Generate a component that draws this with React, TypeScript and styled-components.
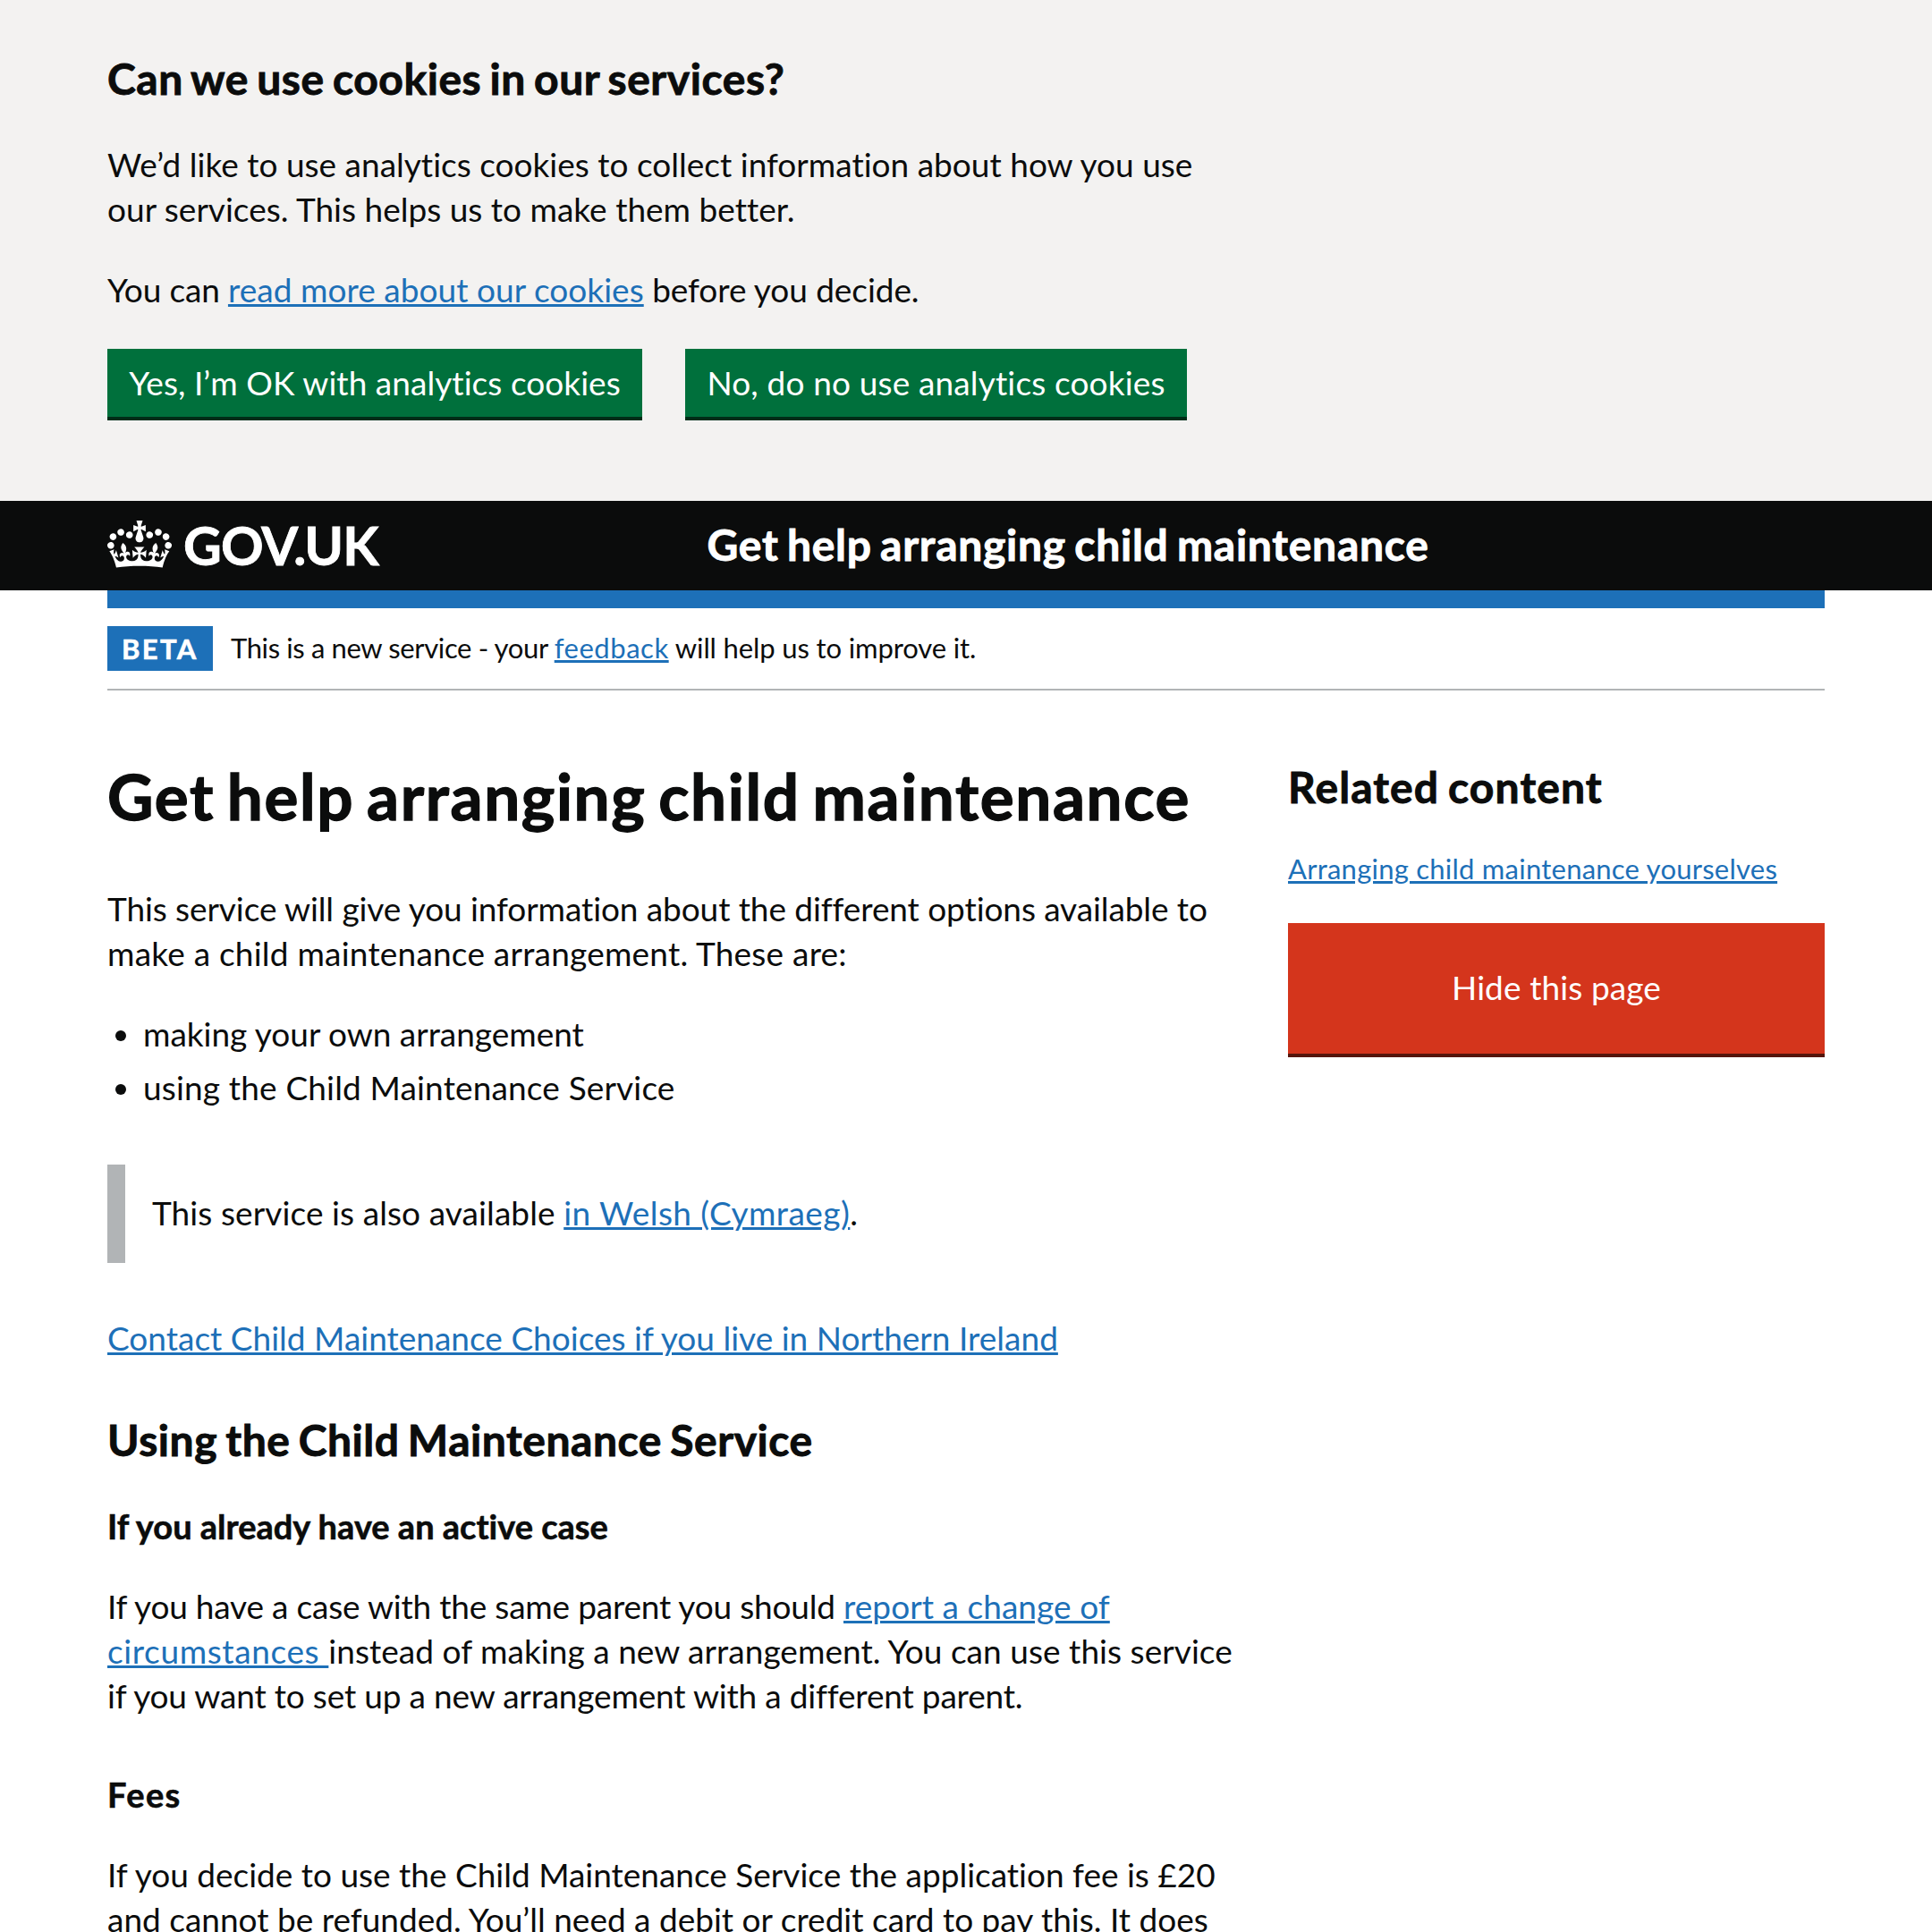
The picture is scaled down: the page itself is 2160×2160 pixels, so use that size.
import React from 'react';
import styled, { createGlobalStyle } from 'styled-components';

const colour = {
  text: '#0b0c0c',
  link: '#1d70b8',
  grey: '#f3f2f1',
  border: '#b1b4b6',
  green: '#00703c',
  greenShadow: '#002d18',
  red: '#d4351c',
  redShadow: '#55150b',
};

const GlobalStyle = createGlobalStyle`
  *, *::before, *::after { box-sizing: border-box; }
  body {
    margin: 0;
    background: #fff;
    color: ${colour.text};
    font-family: Lato, "Noto Sans", sans-serif;
    font-variant-ligatures: none;
  }
  h1, h2, h3, p, ul { margin: 0; padding: 0; }
`;

const Page = styled.div`
  height: 2160px;
  overflow: hidden;
`;

const Container = styled.div`
  width: 1920px;
  margin: 0 auto;
`;

/* A run of text with its own tracking */
const Run = styled.span<{ $track?: number }>`
  letter-spacing: ${({ $track = 0 }) => $track}px;
  white-space: pre;
`;

const Link = styled.a<{ $track?: number }>`
  color: ${colour.link};
  letter-spacing: ${({ $track = 0 }) => $track}px;
  white-space: pre;
  text-decoration: underline;
  text-decoration-thickness: 3px;
  text-underline-offset: 2px;
`;

const Body = styled.p<{ $gap?: number }>`
  font-size: 37px;
  line-height: 50px;
  margin-bottom: ${({ $gap = 40 }) => $gap}px;
`;

const PageTitle = styled.h1`
  font-size: 71px;
  line-height: 80px;
  padding-top: 1px;
  margin-bottom: 61px;
  word-spacing: -5px;
  -webkit-text-stroke: 1.3px currentColor;
`;

const Heading = styled.h2<{ $gap?: number }>`
  font-size: 48px;
  line-height: 60px;
  padding-top: 1px;
  margin-bottom: ${({ $gap = 41 }) => $gap}px;
  word-spacing: -3px;
  -webkit-text-stroke: 0.9px currentColor;
`;

const SubHeading = styled.h3`
  font-size: 38px;
  line-height: 50px;
  margin-bottom: 40px;
  -webkit-text-stroke: 0.6px currentColor;
`;

const CookieBanner = styled.section`
  height: 560px;
  padding-top: 57px;
  background: ${colour.grey};
`;

const ButtonRow = styled.div`
  display: flex;
  gap: 48px;
`;

const Button = styled.button<{ $width: number }>`
  width: ${({ $width }) => $width}px;
  height: 76px;
  padding: 0 0 1px;
  border: 0;
  background: ${colour.green};
  box-shadow: 0 4px 0 ${colour.greenShadow};
  color: #fff;
  font: 400 37px/50px Lato, "Noto Sans", sans-serif;
  text-align: center;
`;

const HideButton = styled(Button)`
  height: 146px;
  padding-bottom: 2px;
  background: ${colour.red};
  box-shadow: 0 4px 0 ${colour.redShadow};
`;

const Header = styled.header`
  background: ${colour.text};
  color: #fff;
`;

const HeaderRow = styled(Container)`
  display: flex;
  align-items: center;
  height: 100px;
`;

const Logo = styled.a`
  display: flex;
  align-items: center;
  width: 670.5px;
  color: #fff;
`;

const Crown = styled.svg`
  width: 72px;
  height: 53px;
  margin-right: 13px;
  margin-top: -4px;
`;

const LogoText = styled.span`
  font-size: 59px;
  font-weight: 700;
  line-height: 70px;
  letter-spacing: -0.9px;
  -webkit-text-stroke: 0.8px currentColor;
`;

const ServiceName = styled.span`
  font-size: 48px;
  font-weight: 700;
  line-height: 60px;
  letter-spacing: 0.73px;
  word-spacing: -3px;
  margin-bottom: 3px;
  -webkit-text-stroke: 0.9px currentColor;
`;

const BlueBar = styled(Container)`
  height: 20px;
  background: ${colour.link};
`;

const PhaseBanner = styled(Container)`
  display: flex;
  align-items: center;
  height: 92px;
  padding: 20px 0;
  border-bottom: 2px solid ${colour.border};
`;

const PhaseTag = styled.strong`
  width: 118px;
  height: 50px;
  padding-left: 16px;
  margin-right: 20px;
  background: ${colour.link};
  color: #fff;
  font-size: 31px;
  line-height: 51px;
  letter-spacing: 2.4px;
  -webkit-text-stroke: 0.6px currentColor;
`;

const PhaseText = styled.span`
  font-size: 31px;
  line-height: 50px;
  padding-bottom: 2px;
`;

const Columns = styled(Container)`
  display: grid;
  grid-template-columns: 1280px 600px;
  column-gap: 40px;
  padding-top: 77px;
`;

const BulletList = styled.ul`
  display: grid;
  row-gap: 10px;
  margin-bottom: 61px;
  list-style: none;
  font-size: 37px;
  line-height: 50px;
`;

const Bullet = styled.li`
  display: flex;
  align-items: center;
  &::before {
    content: '';
    width: 12px;
    height: 12px;
    margin: 4px 19px 0 9px;
    border-radius: 50%;
    background: ${colour.text};
  }
`;

const Inset = styled.div`
  height: 110px;
  margin-bottom: 59px;
  padding: 29px 30px;
  border-left: 20px solid ${colour.border};
  font-size: 37px;
  line-height: 50px;
`;

const RelatedLink = styled.p`
  font-size: 31px;
  line-height: 50px;
  margin-bottom: 36px;
`;

const crownPath =
  'M25 30.2c3.5 1.5 7.7-.2 9.1-3.7 1.5-3.6-.2-7.8-3.9-9.2-3.6-1.4-7.6.3-9.1 3.9-1.4 3.5.3 7.5 3.9 9zM9 39.5c3.6 1.5 7.8-.2 9.2-3.7 1.5-3.6-.2-7.8-3.9-9.1-3.6-1.5-7.6.2-9.1 3.8-1.4 3.5.3 7.5 3.8 9zM4.4 57.2c3.5 1.5 7.7-.2 9.1-3.8 1.5-3.6-.2-7.7-3.9-9.1-3.5-1.5-7.6.3-9.1 3.8-1.4 3.5.3 7.6 3.9 9.1zm38.3-21.4c3.5 1.5 7.7-.2 9.1-3.8 1.5-3.6-.2-7.7-3.9-9.1-3.6-1.5-7.6.3-9.1 3.8-1.3 3.6.4 7.7 3.9 9.1zm64.4-5.6c-3.6 1.5-7.8-.2-9.1-3.7-1.5-3.6.2-7.8 3.8-9.2 3.6-1.4 7.7.3 9.2 3.9 1.3 3.5-.4 7.5-3.9 9zm15.9 9.3c-3.6 1.5-7.7-.2-9.1-3.7-1.5-3.6.2-7.8 3.7-9.1 3.6-1.5 7.7.2 9.2 3.8 1.5 3.5-.3 7.5-3.8 9zm4.7 17.7c-3.6 1.5-7.8-.2-9.2-3.8-1.5-3.6.2-7.7 3.9-9.1 3.6-1.5 7.7.3 9.2 3.8 1.3 3.5-.4 7.6-3.9 9.1zM89.3 35.8c-3.6 1.5-7.8-.2-9.2-3.8-1.4-3.6.2-7.7 3.9-9.1 3.6-1.5 7.7.3 9.2 3.8 1.4 3.6-.3 7.7-3.9 9.1zM69.7 17.7l8.9 4.7V9.3l-8.9 2.8c-.2-.3-.5-.6-.9-.9L72.4 0H59.6l3.5 11.2c-.3.3-.6.5-.9.9l-8.8-2.8v13.1l8.8-4.7c.3.3.6.7.9.9l-5 15.4v.1c-.2.8-.4 1.6-.4 2.4 0 4.1 3.1 7.5 7 8.1h.2c.3 0 .7.1 1 .1.4 0 .7 0 1-.1h.2c4-.6 7.1-4.1 7.1-8.1 0-.8-.1-1.7-.4-2.4V34l-5.1-15.4c.4-.2.7-.6 1-.9zM66 92.8c16.9 0 32.8 1.1 47.1 3.2 4-16.9 8.9-26.7 14-33.5l-9.6-3.4c1 4.9 1.1 7.2 0 10.2-1.5-1.4-3-4.3-4.2-8.7L108.6 76c2.8-2 5-3.2 7.5-3.3-4.4 9.4-10 11.9-13.6 11.2-4.3-.8-6.3-4.6-5.6-7.9 1-4.7 5.7-5.9 8-.5 4.3-8.7-3-11.4-7.6-8.8 7.1-7.2 7.9-13.5 2.1-21.1-8 6.1-8.1 12.3-4.5 20.8-4.7-5.4-12.1-2.5-9.5 6.2 3.4-5.2 7.9-2 7.2 3.1-.6 4.3-6.4 7.8-13.5 7.2-10.3-.9-10.9-8-11.2-13.8 2.5-.5 7.1 1.8 11 7.3L80.2 60c-4.1 4.4-8 5.3-12.3 5.4 1.4-4.4 8-11.6 8-11.6H55.5s6.4 7.2 7.9 11.6c-4.2-.1-8-1-12.3-5.4l1.4 16.4c3.9-5.5 8.5-7.7 10.9-7.3-.3 5.8-.9 12.8-11.1 13.8-7.2.6-12.9-2.9-13.5-7.2-.7-5 3.8-8.3 7.1-3.1 2.7-8.7-4.6-11.6-9.4-6.2 3.7-8.5 3.6-14.7-4.6-20.8-5.8 7.6-5 13.9 2.2 21.1-4.7-2.6-11.9.1-7.7 8.8 2.3-5.5 7.1-4.2 8.1.5.7 3.3-1.3 7.1-5.7 7.9-3.5.7-9-1.8-13.5-11.2 2.5.1 4.7 1.3 7.5 3.3l-4.7-15.4c-1.2 4.4-2.7 7.2-4.3 8.7-1.1-3-.9-5.3 0-10.2l-9.5 3.4c5 6.9 9.9 16.7 14 33.5 14.8-2.1 30.8-3.2 47.7-3.2z';

export default function App() {
  return (
    <Page>
      <GlobalStyle />
      <CookieBanner>
        <Container>
          <Heading><Run $track={0.56}>Can we use cookies in our services?</Run></Heading>
          <Body>
            <Run $track={0.01}>We’d like to use analytics cookies to collect information about how you use</Run>
            <br />
            <Run $track={0.01}>our services. This helps us to make them better.</Run>
          </Body>
          <Body $gap={41}>
            <Run $track={-0.17}>{'You can '}</Run>
            <Link $track={0.04}>read more about our cookies</Link>
            <Run $track={-0.07}>{' before you decide.'}</Run>
          </Body>
          <ButtonRow>
            <Button $width={598}><Run $track={0.05}>Yes, I’m OK with analytics cookies</Run></Button>
            <Button $width={561}><Run $track={0.15}>No, do no use analytics cookies</Run></Button>
          </ButtonRow>
        </Container>
      </CookieBanner>

      <Header>
        <HeaderRow>
          <Logo>
            <Crown viewBox="0 0 132 97" aria-hidden="true">
              <path fill="currentColor" fillRule="evenodd" d={crownPath} />
            </Crown>
            <LogoText>GOV.UK</LogoText>
          </Logo>
          <ServiceName>Get help arranging child maintenance</ServiceName>
        </HeaderRow>
      </Header>
      <BlueBar />
      <PhaseBanner>
        <PhaseTag>BETA</PhaseTag>
        <PhaseText>
          <Run $track={-0.37}>{'This is a new service - your '}</Run>
          <Link $track={0.52}>feedback</Link>
          <Run $track={-0.12}>{' will help us to improve it.'}</Run>
        </PhaseText>
      </PhaseBanner>

      <Columns>
        <main>
          <PageTitle><Run $track={1.62}>Get help arranging child maintenance</Run></PageTitle>
          <Body>
            <Run $track={-0.09}>This service will give you information about the different options available to</Run>
            <br />
            <Run $track={0.22}>make a child maintenance arrangement. These are:</Run>
          </Body>
          <BulletList>
            <Bullet><Run $track={-0.02}>making your own arrangement</Run></Bullet>
            <Bullet><Run $track={0.16}>using the Child Maintenance Service</Run></Bullet>
          </BulletList>
          <Inset>
            <Run $track={0.09}>{'This service is also available '}</Run>
            <Link $track={0.45}>in Welsh (Cymraeg)</Link>.
          </Inset>
          <Body $gap={58}>
            <Link $track={0.01}>Contact Child Maintenance Choices if you live in Northern Ireland</Link>
          </Body>
          <Heading><Run $track={0.55}>Using the Child Maintenance Service</Run></Heading>
          <SubHeading><Run>If you already have an active case</Run></SubHeading>
          <Body $gap={60}>
            <Run $track={-0.2}>{'If you have a case with the same parent you should '}</Run>
            <Link $track={0.05}>report a change of</Link>
            <br />
            <Link $track={0.62}>{'circumstances '}</Link>
            <Run $track={0.045}>instead of making a new arrangement. You can use this service</Run>
            <br />
            <Run $track={-0.18}>if you want to set up a new arrangement with a different parent.</Run>
          </Body>
          <SubHeading><Run $track={1.4}>Fees</Run></SubHeading>
          <Body>
            <Run>If you decide to use the Child Maintenance Service the application fee is £20</Run>
            <br />
            <Run>and cannot be refunded. You’ll need a debit or credit card to pay this. It does</Run>
          </Body>
        </main>
        <aside>
          <Heading $gap={36}><Run $track={1.12}>Related content</Run></Heading>
          <RelatedLink><Link $track={0.24}>Arranging child maintenance yourselves</Link></RelatedLink>
          <HideButton $width={600}><Run $track={0.1}>Hide this page</Run></HideButton>
        </aside>
      </Columns>
    </Page>
  );
}
